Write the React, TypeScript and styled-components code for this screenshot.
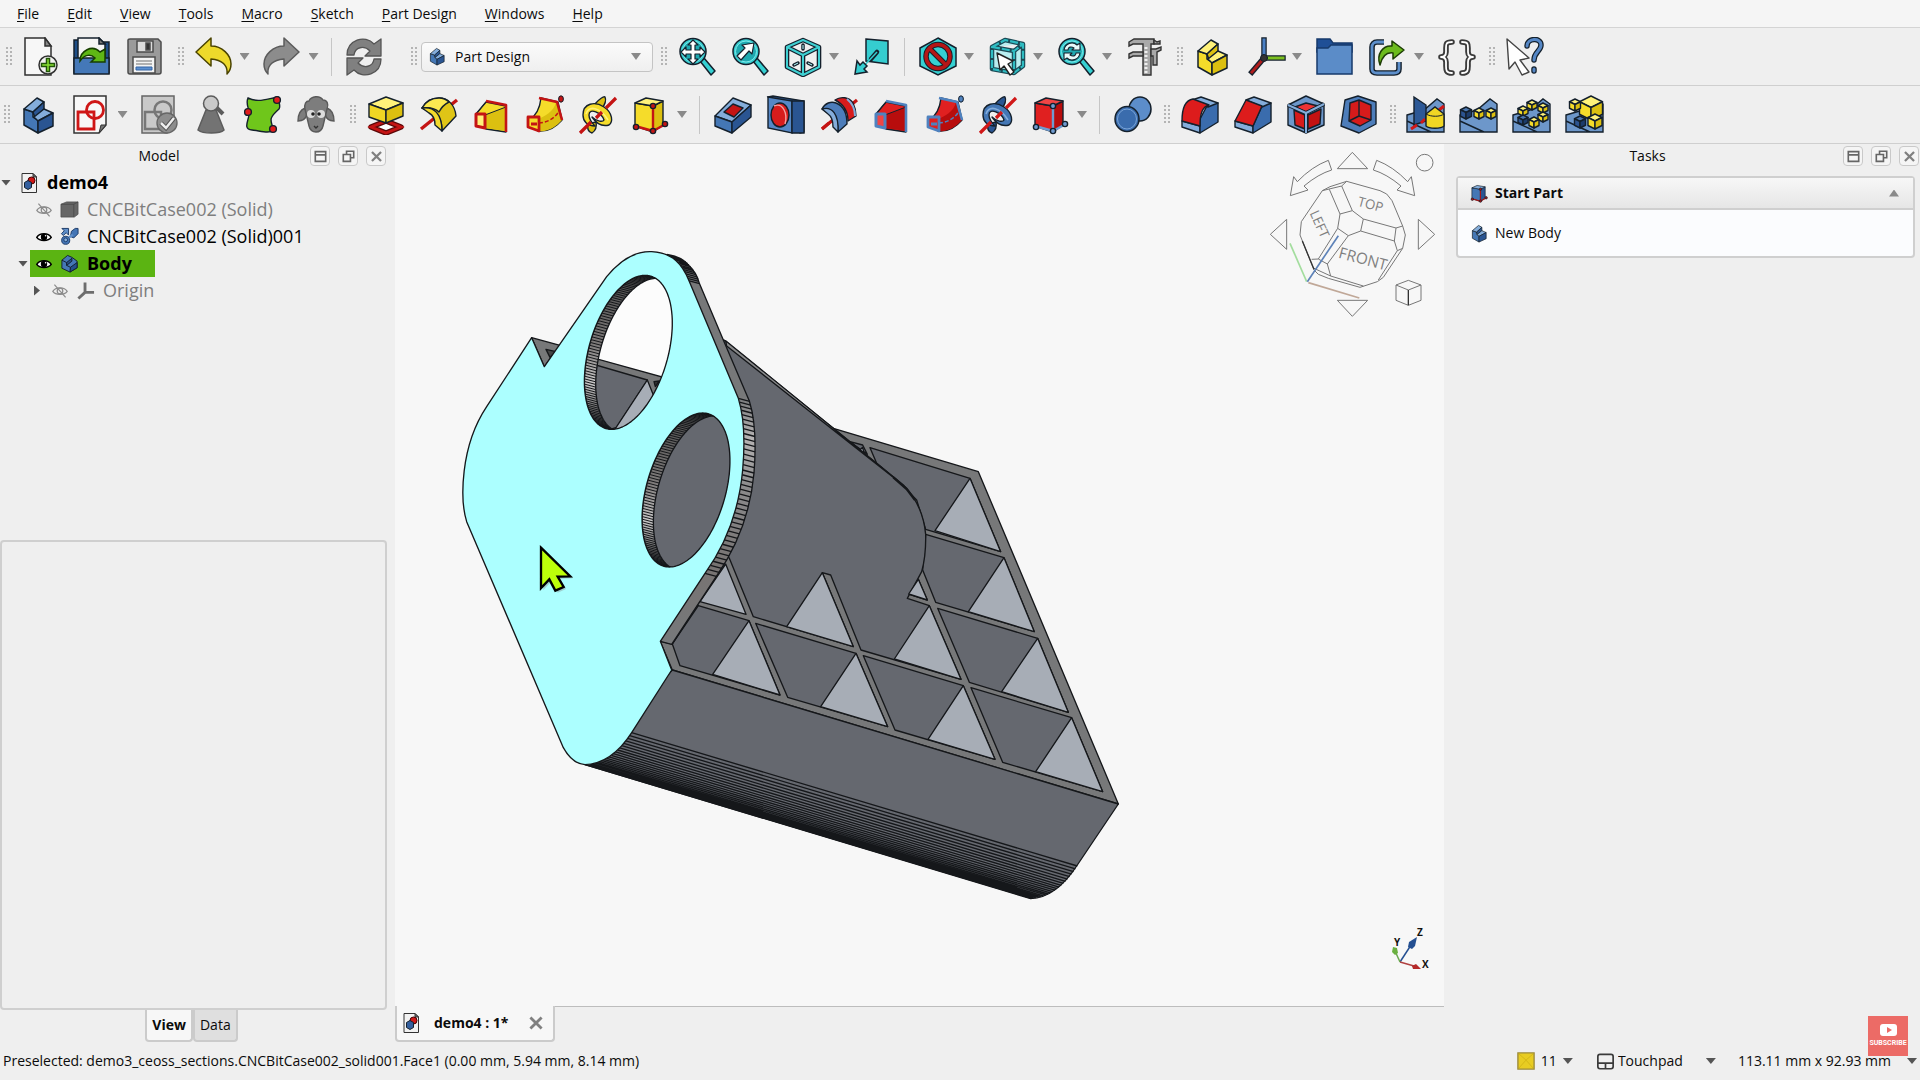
import React from "react";
import styled, { createGlobalStyle } from "styled-components";

const INK = "#14202c";
const FONT = `"Open Sans", "Noto Sans", sans-serif`;

const Global = createGlobalStyle`
  html, body, #root { height: 100%; }
  body { margin: 0; background: #efefef; color: #0b0b0b; font-family: ${FONT}; font-size: 14px; line-height: 20px; overflow: hidden; }
  * { box-sizing: border-box; }
  button, select { font: inherit; color: inherit; }
`;

/* ---------- drawing helpers ---------- */

type Pt = [number, number];
type Faces = [string, string, string];
const YELLOW: Faces = ["#fff27a", "#f5dc2a", "#dcc010"];
const BLUE: Faces = ["#84addb", "#4477b5", "#2a5592"];
const NAVY: Faces = ["#4b77b0", "#2c5490", "#1c3c6c"];
const RED: Faces = ["#f04545", "#e02020", "#b80d0d"];

const Box = ({ x, y, w, h, c, s = INK }: { x: number; y: number; w: number; h: number; c: Faces; s?: string }) => {
  const q = w * 0.5;
  return (
    <g stroke={s} strokeWidth={1.4} strokeLinejoin="round">
      <path d={`M${x} ${y}l${w} ${q}l${-w} ${q}l${-w} ${-q}z`} fill={c[0]} />
      <path d={`M${x - w} ${y + q}l${w} ${q}V${y + h}l${-w} ${-q}z`} fill={c[1]} />
      <path d={`M${x + w} ${y + q}l${-w} ${q}V${y + h}l${w} ${-q}z`} fill={c[2]} />
    </g>
  );
};

const Steps = ({ c }: { c: Faces }) => (
  <g stroke={INK} strokeWidth={1.5} strokeLinejoin="round">
    <path d="M5 14v16l14 8V25l-5-3v-5z" fill={c[1]} />
    <path d="M5 14L18 3l7 4L14 17z" fill={c[0]} />
    <path d="M14 17L25 7v7l-9 9z" fill={c[2]} />
    <path d="M15 22l10-8 9 4-15 8z" fill={c[0]} />
    <path d="M19 26l15-8v13l-15 7z" fill={c[2]} />
  </g>
);

const Lens = ({ children }: { children?: React.ReactNode }) => (
  <g stroke={INK} strokeWidth={1.5} strokeLinejoin="round">
    <path d="M23 24l4-3 11 13-4 4z" fill="#35d0d2" />
    <circle cx={16} cy={14.5} r={13} fill="#35cdd0" />
    <circle cx={16} cy={14.5} r={10.5} fill="#1fa9b0" stroke="#7fe9ea" strokeWidth={1} />
    {children}
  </g>
);

const Wedge = ({ c, e, flare }: { c: Faces; e: string; flare?: boolean }) =>
  flare ? (
    <g strokeLinejoin="round">
      <path d="M4 25c7-4 11-13 12-22l17 4 4 18c-6 7-14 12-24 11z" fill={c[1]} stroke={INK} strokeWidth={1.4} />
      <path d="M14 24c5-3 15-7 17-17l6 18c-6 7-14 12-23 11z" fill={c[2]} />
      <path d="M14 3l18 4 5 18" fill="none" stroke={e} strokeWidth={2.6} />
      <path d="M14 28c6 0 16-4 20-12" fill="none" stroke={e} strokeWidth={1.4} strokeDasharray="4 2" />
      <path d="M3 22h11v14L3 32z" fill={c[1]} stroke={e} strokeWidth={2.8} />
      <path d="M6 29h6" stroke={e} strokeWidth={3} />
      <ellipse cx={36} cy={4} rx={2.4} ry={3.2} fill={e} stroke={INK} />
    </g>
  ) : (
    <g strokeLinejoin="round">
      <path d="M4 19L14 7l20 4v26L14 34z" fill={c[1]} stroke={INK} strokeWidth={1.4} />
      <path d="M13 20l21-8v24l-21-3z" fill={c[2]} />
      <path d="M4 19L14 7M13 20l21-8" stroke={INK} strokeWidth={1} />
      <path d="M14 6l20 4v27" fill="none" stroke={e} strokeWidth={2.6} />
      <path d="M4 19h9v14l-9-2z" fill={c[0]} stroke={e} strokeWidth={3} />
    </g>
  );

const Helix = ({ c, rod }: { c: Faces; rod: string }) => (
  <g stroke={INK} strokeWidth={1.4} strokeLinejoin="round">
    <path d="M17 9c4-5 9-8 10-7c2 4-1 9-4 13z" fill={c[2]} />
    <path d="M10 29l8-2c1 5-1 9-4 11c-4-1-5-5-4-9z" fill={c[2]} />
    <path
      d="M5 20C5 8 17 6 26 12C35 18 35 27 31 30C24 32 18 28 14 22C19 27 25 27 26 25C24 18 11 12 11 20C11 25 14 28 17 31C9 31 5 26 5 20z"
      fill={c[1]}
    />
    <path d="M8 19c3-9 14-7 22 6" fill="none" stroke={c[0]} strokeWidth={1.6} />
    <path d="M38 3l-10 10M24 17l-6 6M13 27L2 38" stroke={rod} strokeWidth={3.2} />
  </g>
);

const Primitive = ({ c, e }: { c: Faces; e: string }) => (
  <g stroke={INK} strokeWidth={1.4} strokeLinejoin="round">
    <path d="M4 8l18 3v26L4 31z" fill={c[1]} />
    <path d="M22 11l10-5v24l-10 7z" fill={c[2]} />
    <path d="M4 8l11-5 17 3-10 5z" fill={c[0]} />
    <path d="M4 31l18 5 11-6M22 36V11" fill="none" stroke={e} strokeWidth={2.4} />
    {[[5, 32], [22, 11], [22, 36], [34, 29]].map(([x, y]) => (
      <circle key={`${x}-${y}`} cx={x} cy={y} r={2.6} fill={e} />
    ))}
  </g>
);

const PatternBase = () => <path d="M1 20l17-5 13-11 7 5v28H1zM1 26l24 11" fill="#6d97ca" stroke={INK} strokeWidth={1.4} />;

const icons: Record<string, React.ReactNode> = {
  newDoc: (
    <g stroke="#303030" strokeWidth={1.5}>
      <path d="M4 1h20l6 8v29H4z" fill="#f7f7f7" />
      <path d="M24 1v8h6z" fill="#888" />
      <circle cx={27} cy={28} r={9} fill="#f2f2f2" />
      <path d="M25.5 21.5h3v5h5v3h-5v5h-3v-5h-5v-3h5z" fill="#8ae234" stroke="#22540a" />
    </g>
  ),
  open: (
    <g stroke={INK} strokeWidth={1.5}>
      <path d="M1 3h5v33H1zM31 5h5v31h-5z" fill="#1f4f88" />
      <path d="M5 1h21l6 6v18H5z" fill="#f4f4f4" />
      <path d="M26 1v6h6z" fill="#777" />
      <path d="M1 21h35v16H1z" fill="#4478b8" />
      <path d="M7 24c0-10 12-17 20-9l5-3v13H18l4-4c-4-4-10-4-15 3z" fill="#5fb715" stroke="#173f00" />
    </g>
  ),
  save: (
    <g stroke="#4c4c4c" strokeWidth={1.5}>
      <path d="M3 3c0-1 1-1 2-1h28l3 3v30c0 1-1 2-2 2H5c-1 0-2-1-2-2z" fill="#9a9a9a" />
      <path d="M12 4h16v11H12z" fill="#dcdcdc" />
      <path d="M21 6h4v7h-4z" fill="#333" />
      <path d="M8 20h22v16H8z" fill="#f4f4f4" />
      <path d="M11 24h16M11 27h16" stroke="#9a9a9a" />
      <path d="M11 30h16v3H11z" fill="#5b8fd0" stroke="#3465a4" strokeWidth={1} />
    </g>
  ),
  undo: <path d="M3 15L18 1v8c11 0 20 9 20 18c0 5-2 8-4 10c1-9-5-14-16-15v7z" fill="#edd92b" stroke="#4a4300" strokeWidth={1.5} strokeLinejoin="round" />,
  redo: <path d="M37 15L22 1v8C11 9 2 18 2 27c0 5 2 8 4 10c-1-9 5-14 16-15v7z" fill="#8c8c8c" stroke="#5b5b5b" strokeWidth={1.5} strokeLinejoin="round" />,
  refresh: (
    <g fill="#808080" stroke="#555" strokeWidth={1.3} strokeLinejoin="round">
      <path d="M3 18C3 3 21-3 30 7l7-5v17H21l5-5c-6-6-15-4-16 4z" />
      <path d="M37 22c0 15-18 21-27 11l-7 5V21h16l-5 5c6 6 15 4 16-4z" />
    </g>
  ),
  body: <Steps c={BLUE} />,
  part: <Steps c={YELLOW} />,
  fitAll: (
    <Lens>
      <path d="M16 3l5 5h-3v5h5v-3l5 5-5 5v-3h-5v5h3l-5 5-5-5h3v-5H9v3l-5-5 5-5v3h5V8h-3z" fill="#fff" strokeWidth={1.2} />
    </Lens>
  ),
  fitSel: (
    <Lens>
      <path d="M24 6l-2 11-3-3-8 9-4-4 8-8-3-3z" fill="#fff" strokeWidth={1.2} />
    </Lens>
  ),
  refreshView: (
    <Lens>
      <path d="M8 13c1-7 9-9 13-5l3-2v7h-8l2-2c-3-2-6-1-6 2zM24 16c-1 7-9 9-13 5l-3 2v-7h8l-2 2c3 2 6 1 6-2z" fill="#e8fbfb" strokeWidth={1.1} />
    </Lens>
  ),
  iso: (
    <g fill="none" strokeLinejoin="round">
      <path d="M20 3l16 7v20l-16 8-16-8V10zM4 10l16 8 16-8M20 18v20" stroke={INK} strokeWidth={4.6} />
      <path d="M20 3l16 7v20l-16 8-16-8V10zM4 10l16 8 16-8M20 18v20" stroke="#3fd0d2" strokeWidth={2} />
      <path d="M20 8v4M11 28l4-2M25 26l4 2" stroke={INK} strokeWidth={3.5} strokeLinecap="round" />
      <path d="M20 8v4M11 28l4-2M25 26l4 2" stroke="#bff" strokeWidth={1} />
    </g>
  ),
  alignView: (
    <g stroke={INK} strokeWidth={1.5}>
      <path d="M14 2l22 2v23l-22-3z" fill="#35cdd0" />
      <path d="M25 15l-6 7" strokeWidth={4.5} strokeLinecap="round" />
      <path d="M25 15L10 31" stroke="#35cdd0" strokeWidth={1.5} />
      <path d="M3 37l2-13 3 4 3-3 4 4-3 3 3 3z" fill="#35cdd0" />
    </g>
  ),
  noSel: (
    <g stroke={INK} strokeWidth={1.5}>
      <path d="M20 1l18 10v18L20 38 2 29V11z" fill="#35d0d2" />
      <circle cx={20} cy={19.5} r={12} fill="none" strokeWidth={5.5} />
      <path d="M11 11l18 18" strokeWidth={5.5} />
      <circle cx={20} cy={19.5} r={12} fill="none" stroke="#b51616" strokeWidth={3.5} />
      <path d="M11 11l18 18" stroke="#b51616" strokeWidth={3.5} />
    </g>
  ),
  boxSel: (
    <g fill="none" strokeLinejoin="round">
      <path d="M5 10l13-7 18 4v22l-9 7-22-4zM5 10l22 4 9-7M27 14v22" fill="#b9eef0" stroke="#1b4a55" strokeWidth={4.5} />
      <path d="M5 10l13-7 18 4v22l-9 7-22-4zM5 10l22 4 9-7M27 14v22" stroke="#2fbcc2" strokeWidth={2.2} strokeDasharray="8 2" />
      <path d="M10 16l16 8-5 3 6 8-4 3-6-9-4 4z" fill="#fff" stroke="#222" strokeWidth={1.4} />
    </g>
  ),
  caliper: (
    <g stroke="#333" strokeWidth={1.4} fill="#a9a9a9">
      <path d="M4 5l5-3h20v5h-3v31h-8V7H8l-4 2z" />
      <path d="M4 17l4-2h10v4H8l-4 2z" />
      <path d="M26 12h5l5-2v3l-4 2v13h-4v-9h-2z" />
      <path d="M29 3v4h6V4l-3 1z" />
      <path d="M21 10v26" stroke="#eee" strokeDasharray="2 2" strokeWidth={3} />
    </g>
  ),
  axes: (
    <g strokeLinecap="square">
      <path d="M18 20V3" stroke={INK} strokeWidth={5.5} />
      <path d="M18 20V3" stroke="#4a80c4" strokeWidth={3} />
      <path d="M18 21h19" stroke={INK} strokeWidth={5.5} />
      <path d="M18 21h19" stroke="#7cc020" strokeWidth={3} />
      <path d="M18 21L6 35" stroke={INK} strokeWidth={5.5} />
      <path d="M18 21L6 35" stroke="#b01c1c" strokeWidth={3} />
      <circle cx={18} cy={21} r={3.5} fill="#333" stroke={INK} />
    </g>
  ),
  folder: (
    <g stroke="#173a6b" strokeWidth={1.5}>
      <path d="M2 2h13l3 4h19v9H2z" fill="#1f4f96" />
      <path d="M2 11h11l3-3h21v29H2z" fill="#5b8cc8" />
    </g>
  ),
  link: (
    <g strokeLinejoin="round">
      <path d="M16 5H9c-3 0-5 2-5 5v22c0 3 2 4 5 4h17c3 0 5-1 5-4v-7" fill="none" stroke={INK} strokeWidth={5.6} />
      <path d="M16 5H9c-3 0-5 2-5 5v22c0 3 2 4 5 4h17c3 0 5-1 5-4v-7" fill="none" stroke="#5d8fcb" strokeWidth={2.8} />
      <path d="M12 28C8 17 15 8 24 9V4l12 9-11 9v-6c-7-1-11 4-13 12z" fill="#6cbb1c" stroke="#1d3d05" strokeWidth={1.5} />
    </g>
  ),
  braces: (
    <g fill="none" strokeLinecap="round" strokeLinejoin="round">
      <path d="M15 5c-6 0-6 2-6 6v4c0 3-2 5-5 5c3 0 5 2 5 5v4c0 4 0 7 6 7M25 5c6 0 6 2 6 6v4c0 3 2 5 5 5c-3 0-5 2-5 5v4c0 4 0 7-6 7" stroke="#3b3b3b" strokeWidth={5.6} />
      <path d="M15 5c-6 0-6 2-6 6v4c0 3-2 5-5 5c3 0 5 2 5 5v4c0 4 0 7 6 7M25 5c6 0 6 2 6 6v4c0 3 2 5 5 5c-3 0-5 2-5 5v4c0 4 0 7-6 7" stroke="#fff" strokeWidth={1.8} />
    </g>
  ),
  whatsThis: (
    <g strokeLinejoin="round">
      <path d="M2 2l22 19-9 2 9 12-7 3-7-13-6 7z" fill="#fff" stroke="#444" strokeWidth={1.4} />
      <path d="M22 9c0-8 14-9 14-1c0 6-7 7-7 15M29 32v2" fill="none" stroke={INK} strokeWidth={5.5} strokeLinecap="round" />
      <path d="M22 9c0-8 14-9 14-1c0 6-7 7-7 15M29 32v2" fill="none" stroke="#5587c6" strokeWidth={3} strokeLinecap="round" />
    </g>
  ),
  sketch: (
    <g fill="none">
      <path d="M3 1h32v29l-7 8H3z" fill="#f8f8f8" stroke="#333" strokeWidth={1.5} />
      <path d="M35 30h-5l-2 8z" fill="#777" stroke="#333" />
      <circle cx={24} cy={15} r={8.5} stroke="#cf1717" strokeWidth={2.8} />
      <path d="M7 17h16v17H7z" stroke="#cf1717" strokeWidth={2.8} />
    </g>
  ),
  validate: (
    <g fill="none">
      <path d="M2 1h32v29l-7 8H2z" fill="#c9c9c9" stroke="#666" strokeWidth={1.5} />
      <circle cx={23} cy={15} r={8.5} stroke="#777" strokeWidth={2.5} />
      <path d="M5 17h16v17H5z" stroke="#777" strokeWidth={2.5} />
      <circle cx={27} cy={28} r={10} fill="#8d8d8d" stroke="#666" strokeWidth={1.4} />
      <path d="M21 28l5 5 8-10" stroke="#555" strokeWidth={4.5} />
      <path d="M21 28l5 5 8-10" stroke="#eee" strokeWidth={2.5} />
    </g>
  ),
  pawn: (
    <g stroke="#5c5c5c" strokeWidth={1.5}>
      <path d="M14 15h10l8 20c-4 4-21 4-26 0z" fill="#737373" />
      <path d="M25 13l6 6" strokeWidth={4} />
      <circle cx={19} cy={8.5} r={7.5} fill="#c9c9c9" />
    </g>
  ),
  surface: (
    <g stroke={INK} strokeWidth={1.4}>
      <path d="M4 3c10 5 18 1 30-1c1 7 3 9 1 12c-9 8-10 10-5 21c-5 4-13 1-22 0c-9-1-4-8-3-15c1-6-4-11-1-17z" fill="#6fc61b" />
      <circle cx={33} cy={5} r={3.4} fill="#e01b1b" />
      <circle cx={4} cy={17} r={3.4} fill="#e01b1b" />
      <circle cx={29} cy={34} r={3.4} fill="#e01b1b" />
    </g>
  ),
  sheep: (
    <g fill="#7d7d7d" stroke="#5a5a5a" strokeWidth={1.4}>
      <path d="M9 13c-5 2-7 8-7 13c5 0 8-3 9-7zM31 13c5 2 7 8 7 13c-5 0-8-3-9-7z" />
      <path d="M9 14c-1-5 1-8 4-8c2-5 11-6 14-1c4 0 6 4 4 9l-4 17c-2 8-12 8-14 0z" />
      <circle cx={15} cy={19} r={4} fill="#ddd" stroke="none" />
      <circle cx={25} cy={19} r={4} fill="#ddd" stroke="none" />
      <circle cx={17} cy={19} r={1.8} fill="#222" stroke="none" />
      <circle cx={23} cy={19} r={1.8} fill="#222" stroke="none" />
      <path d="M18 31l2 2 2-2" fill="none" stroke="#333" />
    </g>
  ),
  pad: (
    <g>
      <path d="M20 26l15 6-15 6-15-6z" fill="#fff" stroke="#5c0808" strokeWidth={5.5} strokeLinejoin="round" />
      <path d="M20 26l15 6-15 6-15-6z" fill="none" stroke="#c41414" strokeWidth={2.8} />
      <g stroke={INK} strokeWidth={1.4} strokeLinejoin="round">
        <path d="M3 9l17-7 17 6-17 7z" fill="#fff27a" />
        <path d="M3 9l17 6v13L3 22z" fill="#f0d624" />
        <path d="M37 8l-17 7v13l17-7z" fill="#dcc010" />
      </g>
    </g>
  ),
  revolve: (
    <g stroke={INK} strokeWidth={1.4} strokeLinejoin="round">
      <path d="M2 34L38 5" stroke="#c41414" strokeWidth={3.4} />
      <path d="M3 13C7 6 13 3 20 3c9 0 16 7 17 18L23 36c0-10-3-16-9-18z" fill="#dfc516" />
      <path d="M3 13C7 6 13 3 20 3c4 0 7 1 10 4c-4 2-8 6-10 10c-3-3-9-5-17-4z" fill="#fbe951" />
      <path d="M3 13c12-2 20 6 20 23l-7-6c0-6-2-10-6-12z" fill="#f3da2c" />
    </g>
  ),
  loft: <Wedge c={YELLOW} e="#c41414" />,
  pipe: <Wedge c={YELLOW} e="#c41414" flare />,
  helix: <Helix c={YELLOW} rod="#c41414" />,
  primitive: <Primitive c={YELLOW} e="#c41414" />,
  pocket: (
    <g stroke={INK} strokeWidth={1.4} strokeLinejoin="round">
      <path d="M2 21L20 3l18 7-19 17z" fill="#84addb" />
      <path d="M2 21l17 6v11L2 31z" fill="#4477b5" />
      <path d="M38 10v12L19 38V27z" fill="#2a5592" />
      <path d="M11 17l9-8 10 4-9 9z" fill="#c41414" />
    </g>
  ),
  hole: (
    <g stroke={INK} strokeWidth={1.4}>
      <path d="M2 2l5-1 31 5v31l-4 1z" fill="#2a5592" />
      <path d="M2 2l24 4v32L2 33z" fill="#5587c6" />
      <path d="M26 6l12 0v32H26z" fill="#2a5592" />
      <ellipse cx={14} cy={20} rx={9} ry={12} fill="#d81c1c" />
      <path d="M8 11c9-4 14 8 11 18" fill="none" stroke="#f7a0a0" />
    </g>
  ),
  groove: (
    <g stroke={INK} strokeWidth={1.4} strokeLinejoin="round">
      <path d="M38 5L3 34" stroke="#c41414" strokeWidth={3.2} />
      <path d="M16 5c6-4 14-3 18 3c2 4 3 8 3 13l-8 5c0-10-5-17-13-21z" fill="#d81c1c" />
      <path d="M28 4c5 4 8 10 8 17" fill="none" stroke="#84addb" strokeWidth={2} />
      <path d="M3 14C6 8 12 6 17 8c8 3 11 12 11 21l-9 8c0-11-4-17-9-18z" fill="#4d7dba" />
      <path d="M3 14c10-3 17 5 16 23l-5-5c0-6-2-11-5-13z" fill="#84addb" />
      <path d="M10 28L3 34" stroke="#c41414" strokeWidth={3} />
    </g>
  ),
  subLoft: <Wedge c={RED} e="#4f82bf" />,
  subPipe: <Wedge c={RED} e="#4f82bf" flare />,
  subHelix: <Helix c={BLUE} rod="#d01818" />,
  subPrimitive: <Primitive c={RED} e="#6f9bd0" />,
  boolean: (
    <g stroke={INK} strokeWidth={1.5}>
      <ellipse cx={27} cy={14} rx={11} ry={12} fill="#5c8dca" />
      <ellipse cx={14} cy={24} rx={12} ry={12.5} fill="#3a6cad" />
      <ellipse cx={14} cy={24} rx={9.5} ry={10} fill="none" stroke="#7aa5d8" strokeWidth={1} />
    </g>
  ),
  fillet: (
    <g stroke={INK} strokeWidth={1.4} strokeLinejoin="round">
      <path d="M2 26l18 5v7L2 32z" fill="#84addb" />
      <path d="M20 38V24L28 9l10-1v19z" fill="#3a6cad" />
      <path d="M12 5l9-3 17 6-10 4z" fill="#84addb" />
      <path d="M2 26C2 13 6 5 13 4l16 6c-7 2-9 9-9 21z" fill="#dd1c1c" />
    </g>
  ),
  chamfer: (
    <g stroke={INK} strokeWidth={1.4} strokeLinejoin="round">
      <path d="M2 26l18 5v7L2 32z" fill="#84addb" />
      <path d="M20 38V31l9-20 9-3v19z" fill="#3a6cad" />
      <path d="M13 5l8-3 17 6-9 4z" fill="#84addb" />
      <path d="M2 26L13 5l16 6-9 20z" fill="#dd1c1c" />
    </g>
  ),
  draft: (
    <g stroke={INK} strokeWidth={1.4} strokeLinejoin="round">
      <path d="M2 10L20 1l18 8v21L20 38 2 30z" fill="#6d97ca" />
      <path d="M9 12l11-4 12 3-12 6z" fill="#e33" />
      <path d="M8 15l11 5v14L9 30z" fill="#d61b1b" />
      <path d="M22 20l13-6-1 15-12 5z" fill="#c41212" />
      <path d="M2 10l18 8 18-9M20 18v20" fill="none" strokeWidth={4} />
      <path d="M2 10l18 8 18-9M20 18v20" fill="none" stroke="#84addb" strokeWidth={2} />
    </g>
  ),
  thickness: (
    <g stroke={INK} strokeWidth={1.4} strokeLinejoin="round">
      <path d="M6 5l13-4 18 6v22L20 38 2 31z" fill="#4d7dba" />
      <path d="M11 8l9-3 12 5v15l-11 6-11-5z" fill="#d61b1b" />
      <path d="M20 5v16l-10 5M20 21l12 4" fill="none" />
    </g>
  ),
  mirror: (
    <g>
      <PatternBase />
      <path d="M8 2l12 8v16L8 30z" fill="#2c5896" stroke={INK} strokeWidth={1.4} />
      <path d="M5 34l6-4M15 28l4-4M33 15l5-4" stroke="#d01818" strokeWidth={3} />
      <path d="M20 19l9-7 9 7v12c-3 3-15 3-18 0z" fill="#f0d624" stroke={INK} strokeWidth={1.4} />
      <path d="M20 19c5 3 14 3 18 0" stroke={INK} fill="none" />
    </g>
  ),
  linear: (
    <g>
      <PatternBase />
      <Box x={7} y={12} w={5.5} h={12} c={NAVY} />
      <Box x={20} y={13} w={5} h={11} c={YELLOW} />
      <Box x={32} y={13} w={5} h={11} c={YELLOW} />
    </g>
  ),
  polar: (
    <g>
      <PatternBase />
      <Box x={20} y={5} w={5} h={10} c={YELLOW} />
      <Box x={11} y={11} w={5} h={10} c={YELLOW} />
      <Box x={31} y={8} w={5} h={10} c={YELLOW} />
      <Box x={31} y={17} w={5} h={10} c={YELLOW} />
      <Box x={11} y={20} w={5} h={10} c={NAVY} />
      <Box x={22} y={22} w={5} h={11} c={YELLOW} />
    </g>
  ),
  multi: (
    <g>
      <PatternBase />
      <Box x={26} y={1} w={11.5} h={24} c={YELLOW} />
      <Box x={10} y={4} w={5.5} h={12} c={YELLOW} />
      <Box x={15} y={21} w={5.5} h={12} c={NAVY} />
      <Box x={30} y={19} w={7} h={15} c={YELLOW} />
    </g>
  ),
  doc: (
    <g stroke="#333" strokeWidth={2}>
      <path d="M6 1h22l7 7v31H6z" fill="#f2f2f2" />
      <path d="M28 1v7h7z" fill="#777" />
      <circle cx={25} cy={15} r={7} fill="#d01818" stroke="#400" />
      <path d="M11 19l7-4 7 4v10l-7 4-7-4z" fill="#345f9e" stroke={INK} />
    </g>
  ),
  solid: (
    <g stroke="#4a4a4a" strokeWidth={1.5}>
      <path d="M2 9l12-5h24v26l-8 6H2z" fill="#666" />
      <path d="M2 9h27v27M29 9l9-5" fill="none" stroke="#444" />
    </g>
  ),
  clone: (
    <g stroke="#1c3a66" strokeWidth={2}>
      <path d="M4 3h14v14l-5-5-6 6-4-4 6-6z" fill="#5f8fca" />
      <path d="M24 9l8-6h6v11l-9 9-7-3z" fill="#4375b5" />
      <circle cx={12} cy={28} r={8.5} fill="#4375b5" />
      <path d="M19 22l8-6" strokeWidth={5} stroke="#5f8fca" />
      <circle cx={12} cy={27} r={4} fill="#84addb" />
    </g>
  ),
  bodySmall: (
    <g stroke={INK} strokeWidth={2} strokeLinejoin="round">
      <path d="M4 13L16 3l9 4 11 8v14l-15 9-17-8z" fill="#4477b5" />
      <path d="M4 13l10 5v6l8 4v10" fill="none" />
      <path d="M14 18l11-9v6l-11 9z" fill="#24508c" />
      <path d="M22 28l14-10v11l-15 9z" fill="#24508c" />
    </g>
  ),
  origin: <path d="M19 3v21H38M19 24L5 37" fill="none" stroke="#6d6d6d" strokeWidth={6} />,
  eye: (
    <g>
      <path d="M2 21C9 9 31 9 38 21C31 31 9 31 2 21z" fill="#fff" stroke="#000" strokeWidth={4} />
      <circle cx={20} cy={20} r={8} />
      <circle cx={24} cy={17} r={2} fill="#fff" />
    </g>
  ),
  eyeOff: (
    <g fill="none" stroke="#8b8b8b" strokeWidth={3}>
      <path d="M2 21C9 9 31 9 38 21C31 31 9 31 2 21z" />
      <circle cx={20} cy={20} r={7} />
      <path d="M6 4l28 32" />
    </g>
  ),
  startPart: <Primitive c={BLUE} e="#a51616" />,
  min: <path d="M4 5h32v30H4zM4 15h32" fill="none" stroke="#666" strokeWidth={5} />,
  float: <path d="M14 13V4h22v20H27M4 14h22v21H4z" fill="none" stroke="#666" strokeWidth={5} />,
  close: <path d="M6 6l28 28M34 6L6 34" fill="none" stroke="#808080" strokeWidth={7} />,
  notif: (
    <g>
      <path d="M2 2h36v36H2z" fill="#e8cc22" stroke="#9c8a3a" strokeWidth={3} />
      <path d="M4 4l16 14L36 4M4 36l16-18 16 18" fill="none" stroke="#d2b616" strokeWidth={2} />
    </g>
  ),
  touchpad: <path d="M7 3h26c3 0 5 2 5 5v24c0 3-2 5-5 5H7c-3 0-5-2-5-5V8c0-3 2-5 5-5zM2 24h36M20 24v13" fill="none" stroke="#3a3a3a" strokeWidth={4} />,
};

const Svg = styled.svg<{ $size: number }>`
  display: block;
  flex: none;
  width: ${(p) => p.$size}px;
  height: ${(p) => p.$size}px;
`;
const Icon = ({ name, size = 40 }: { name: string; size?: number }) => (
  <Svg $size={size} viewBox="0 0 40 40" aria-hidden="true">
    {icons[name]}
  </Svg>
);

const Caret = styled.span<{ $dir?: "up" | "right"; $dark?: boolean }>`
  flex: none;
  width: ${(p) => (p.$dir === "right" ? "6px" : "10px")};
  height: ${(p) => (p.$dir === "right" ? "10px" : p.$dark ? "6px" : "7px")};
  background: ${(p) => (p.$dark ? "#555" : "#8a8a8a")};
  clip-path: ${(p) =>
    p.$dir === "up"
      ? "polygon(50% 0, 100% 100%, 0 100%)"
      : p.$dir === "right"
        ? "polygon(0 0, 100% 50%, 0 100%)"
        : "polygon(0 0, 100% 0, 50% 100%)"};
`;

/* ---------- window frame ---------- */

const Window = styled.div`
  display: flex;
  flex-direction: column;
  height: 100vh;
`;
const MenuBar = styled.nav`
  display: flex;
  flex: none;
  height: 28px;
  padding: 0 3px;
  background: #f5f5f5;
  border-bottom: 1px solid #d4d4d4;
`;
const MenuButton = styled.button`
  padding: 0 14px;
  border: 0;
  background: none;
  u { text-underline-offset: 2px; }
`;
const Toolbar = styled.div`
  display: flex;
  align-items: center;
  flex: none;
  height: 58px;
  border-bottom: 1px solid #cfcfcf;
`;
const ToolRun = styled.div<{ $slot: number; $drop: number; $grip: number; $start?: number }>`
  --slot: ${(p) => p.$slot}px;
  --drop: ${(p) => p.$drop}px;
  --grip: ${(p) => p.$grip}px;
  --start: ${(p) => p.$start ?? p.$grip}px;
  display: flex;
  align-items: center;
`;
const Tool = styled.button<{ $menu?: boolean }>`
  display: grid;
  grid-template-columns: var(--slot) ${(p) => (p.$menu ? "var(--drop)" : "")};
  align-items: center;
  justify-items: center;
  padding: 0;
  border: 0;
  background: none;
  ${Caret} { margin-left: -6px; }
`;
const Grip = styled.span`
  display: flex;
  flex: none;
  justify-content: flex-end;
  width: var(--grip);
  height: 20px;
  padding-right: 3px;
  &:first-child { width: var(--start); }
  &::before {
    content: "";
    width: 6px;
    background: radial-gradient(circle at 1px 1px, #b4b4b4 1px, transparent 1px) 0 0 / 4px 4px;
  }
`;
const Divider = styled.span`
  flex: none;
  width: 1px;
  height: 38px;
  margin: 0 6px;
  background: #c6c6c6;
`;
const Combo = styled.label`
  display: flex;
  align-items: center;
  gap: 8px;
  width: 232px;
  height: 30px;
  margin: 0 2px 0 1px;
  padding: 0 11px 0 6px;
  border: 1px solid #c4c4c4;
  border-radius: 4px;
  background: linear-gradient(#fbfbfb, #efefef);
`;
const PlainSelect = styled.select<{ $width?: number }>`
  appearance: none;
  flex: ${(p) => (p.$width ? "none" : "1")};
  width: ${(p) => (p.$width ? `${p.$width}px` : "auto")};
  padding: 0;
  border: 0;
  outline: 0;
  background: none;
`;

const menus = ["File", "Edit", "View", "Tools", "Macro", "Sketch", "Part Design", "Windows", "Help"];

const renderTools = (items: string[]) =>
  items.map((it, i) => {
    if (it === "|") return <Divider key={i} />;
    if (it === "::") return <Grip key={i} />;
    const menu = it.endsWith("+");
    const name = menu ? it.slice(0, -1) : it;
    return (
      <Tool key={i} $menu={menu} aria-label={name}>
        <Icon name={name} />
        {menu && <Caret />}
      </Tool>
    );
  });

const Workspace = styled.main`
  display: grid;
  grid-template-columns: 395px minmax(0, 1fr) 476px;
  flex: 1;
  min-height: 0;
`;

/* ---------- docks ---------- */

const Dock = styled.aside<{ $left?: boolean }>`
  display: flex;
  flex-direction: column;
  min-height: 0;
  padding-right: ${(p) => (p.$left ? "8px" : "0")};
`;
const DockHeader = styled.header`
  display: flex;
  align-items: center;
  flex: none;
  gap: 8px;
  height: 24px;
  padding: 0 1px 0 16px;
`;
const DockTitle = styled.h2`
  flex: 1;
  margin: 0;
  font-size: 14px;
  font-weight: 400;
  text-align: center;
`;
const DockButton = styled.button`
  display: grid;
  place-items: center;
  width: 20px;
  height: 20px;
  padding: 0;
  border: 1px solid #c9c9c9;
  border-radius: 4px;
  background: #f5f5f5;
`;
const DockHead = ({ title }: { title: string }) => (
  <DockHeader>
    <DockTitle>{title}</DockTitle>
    {["min", "float", "close"].map((n) => (
      <DockButton key={n} aria-label={`${n} ${title}`}>
        <Icon name={n} size={13} />
      </DockButton>
    ))}
  </DockHeader>
);

const Tree = styled.ul`
  flex: 1;
  margin: 0;
  padding: 1px 0 0;
  list-style: none;
  font-size: 18px;
  line-height: 27px;
`;
const TreeRow = styled.li<{ $indent: number; $muted?: boolean; $bold?: boolean }>`
  display: flex;
  align-items: center;
  height: 27px;
  padding-left: ${(p) => p.$indent}px;
  color: ${(p) => (p.$muted ? "#7e7e7e" : "#000")};
  font-weight: ${(p) => (p.$bold ? 700 : 400)};
`;
const Twist = styled.span`
  display: flex;
  width: 12px;
`;
const TreeLabel = styled.span<{ $selected?: boolean }>`
  display: flex;
  align-items: center;
  gap: 8px;
  height: 27px;
  padding: 0 23px 0 6px;
  background: ${(p) => (p.$selected ? "#5bb412" : "none")};
`;
const PropertyPanel = styled.section`
  flex: none;
  height: 470px;
  border: 2px solid #cfcfcf;
  border-radius: 4px;
`;
const PropertyTabs = styled.div`
  display: flex;
  justify-content: center;
  flex: none;
  height: 32px;
  padding-right: 4px;
`;
const PropertyTab = styled.button<{ $active?: boolean }>`
  padding: 0 5px;
  border: 2px solid #cbcbcb;
  border-top: 0;
  border-radius: 0 0 4px 4px;
  background: ${(p) => (p.$active ? "#f7f7f7" : "#dfdfdf")};
  font-weight: ${(p) => (p.$active ? 700 : 400)};
`;

const TaskBox = styled.section`
  margin: 8px 5px 0 12px;
  border: 2px solid #cfcfcf;
  border-radius: 4px;
  background: #fbfcfe;
`;
const TaskHead = styled.button`
  display: flex;
  align-items: center;
  gap: 6px;
  width: 100%;
  height: 32px;
  padding: 0 14px 0 12px;
  border: 0;
  border-bottom: 2px solid #cfcfcf;
  background: linear-gradient(#f7f7f7, #e6e6e6);
  font-weight: 700;
  ${Caret} { margin-left: auto; }
`;
const TaskRow = styled.button`
  display: flex;
  align-items: center;
  gap: 6px;
  width: 100%;
  height: 46px;
  padding: 0 12px;
  border: 0;
  background: none;
`;

/* ---------- 3D view ---------- */

const Center = styled.section`
  display: flex;
  flex-direction: column;
  min-width: 0;
`;
const Viewport = styled.div`
  position: relative;
  flex: 1;
  min-height: 0;
  background: #f7f7f7;
  border-bottom: 1px solid #bdbdbd;
`;
const SceneSvg = styled.svg`
  display: block;
  width: 100%;
  height: 100%;
`;
const NavSvg = styled.svg`
  position: absolute;
  top: 0;
  right: 0;
  width: 204px;
  height: 186px;
`;
const CrossSvg = styled.svg`
  position: absolute;
  right: 10px;
  bottom: 32px;
  width: 50px;
  height: 50px;
`;
const DocTabs = styled.div`
  display: flex;
  flex: none;
  height: 35px;
`;
const DocTab = styled.div`
  display: flex;
  align-items: center;
  z-index: 1;
  width: 160px;
  margin-top: -1px;
  padding: 0 9px 0 4px;
  border: 2px solid #cbcbcb;
  border-top: 0;
  border-radius: 0 0 4px 4px;
  background: #f7f7f7;
  font-weight: 700;
  gap: 13px;
`;
const TabClose = styled.button`
  display: flex;
  margin-left: auto;
  padding: 0;
  border: 0;
  background: none;
`;

const D: Pt = [34, 9];
const cubic = (a: Pt, b: Pt, c: Pt, d: Pt, n: number): Pt[] =>
  Array.from({ length: n + 1 }, (_, i) => {
    const t = i / n;
    const u = 1 - t;
    return [0, 1].map((k) => u * u * u * a[k] + 3 * u * u * t * b[k] + 3 * u * t * t * c[k] + t * t * t * d[k]) as Pt;
  });
const ring = (cx: number, cy: number, n: number): Pt[] =>
  Array.from({ length: n }, (_, i) => {
    const a = (i / n) * Math.PI * 2;
    return [cx + 50 * Math.cos(a) + 122 * Math.sin(a), cy - 231 * Math.cos(a)] as Pt;
  });
const poly = (p: Pt[]) => "M" + p.map(([x, y]) => `${x.toFixed(1)} ${y.toFixed(1)}`).join("L") + "Z";
const sweep = (p: Pt[], d: Pt) => p.map(([x, y]) => `M${x.toFixed(1)} ${y.toFixed(1)}l${d[0]} ${d[1]}`).join("");

const rightArc = [
  ...cubic([895, 505], [912, 560], [915, 640], [908, 720], 15),
  ...cubic([908, 720], [898, 830], [860, 940], [795, 1030], 23),
];
const topArc = cubic([685, 77], [715, 88], [735, 120], [745, 152], 14);
const bottomArc = cubic([575, 1508], [535, 1570], [490, 1602], [435, 1604], 21);

const Hole = ({ id, cx, cy, children }: { id: string; cx: number; cy: number; children: React.ReactNode }) => {
  const front = ring(cx, cy, 170);
  const back = poly(front.map(([x, y]) => [x + D[0], y + D[1]] as Pt));
  return (
    <g>
      <clipPath id={`${id}-front`}>
        <path d={poly(front)} />
      </clipPath>
      <clipPath id={`${id}-back`}>
        <path d={back} />
      </clipPath>
      <g clipPath={`url(#${id}-front)`}>
        <path d={poly(front)} fill="url(#wall)" />
        <path d={sweep(front, D)} strokeWidth={3} />
        <g clipPath={`url(#${id}-back)`}>{children}</g>
        <path d={back} fill="none" />
      </g>
      <path d={poly(front)} fill="none" />
    </g>
  );
};

const CELL = "#65686f";
const RIB = "#777879";
const LIGHT = "#a7adb6";

const Scene = () => (
  <SceneSvg viewBox="-135 -258 3147 2586" role="img" aria-label="3D model">
    <defs>
      <linearGradient id="wall" x1="0" y1="0" x2="0" y2="1">
        <stop offset="0" stopColor="#4a4a4a" />
        <stop offset="0.45" stopColor="#7d7a79" />
        <stop offset="0.7" stopColor="#c8c7c7" />
        <stop offset="0.85" stopColor="#777" />
        <stop offset="1" stopColor="#333" />
      </linearGradient>
      <linearGradient id="edge" gradientUnits="userSpaceOnUse" x1="0" y1="80" x2="0" y2="1240">
        <stop offset="0" stopColor="#777879" />
        <stop offset="0.36" stopColor="#777879" />
        <stop offset="0.47" stopColor="#b5b3b3" />
        <stop offset="0.6" stopColor="#8b8b8c" />
        <stop offset="0.8" stopColor="#777372" />
        <stop offset="1" stopColor="#77797b" />
      </linearGradient>
    </defs>
    <g stroke="#15171a" strokeWidth={4} strokeLinejoin="round">
      <path d="M275 323L360 346L313 410Z" fill={RIB} />
      <path d="M318 358l30 7-18 17z" fill="#444" />
      <g transform="translate(600 570)">
        <path d="M580 25L1015 155L1435 1152L97 750L60 663L200 460L300 300Z" fill={RIB} />
        <path d="M97 750L1435 1152L1312 1335C1272 1397 1227 1434 1172 1436L-165 1034Z" fill={CELL} />
        <g fill={CELL}>
          <path d="M175 557L327 602L420 825L120 737L97 672Z" />
          <path d="M347 610L648 700L743 920L443 832Z" />
          <path d="M670 707L970 797L1065 1018L765 930Z" />
          <path d="M993 803L1295 893L1388 1115L1088 1027Z" />
          <path d="M893 565L1193 655L1285 877L988 787Z" />
          <path d="M857 343L1092 413L1183 635L887 547L848 450Z" />
          <path d="M690 83L990 175L1082 395L857 328L830 240L770 180L710 130Z" />
          <path d="M630 65L668 75L682 103Z" />
        </g>
        <g fill={LIGHT}>
          <path d="M327 602L218 763L420 825Z" />
          <path d="M648 700L542 860L743 920Z" />
          <path d="M970 797L864 958L1065 1018Z" />
          <path d="M1295 893L1187 1055L1388 1115Z" />
          <path d="M1193 655L1085 815L1285 877Z" />
          <path d="M1092 413L985 575L1183 635Z" />
          <path d="M990 175L885 332L1082 395Z" />
          <path d="M257 432L180 545L318 583Z" />
          <path d="M835 478L806 522L862 540Z" />
          <path d="M668 82l-12 12 18 14z" />
        </g>
        <path
          d="M252 -240L580 25L710 130L790 195C830 235 852 290 857 343C858 390 852 430 845 455L802 535L868 557L963 778L663 690L572 465L547 458L640 680L340 590L268 415L200 300L220 -230Z"
          fill={CELL}
        />
        <path d="M835 478L806 522L862 540Z" fill={LIGHT} />
        <g fill={LIGHT}>
          <path d="M547 458L440 620L640 680Z" />
          <path d="M868 557L763 717L963 778Z" />
        </g>
        <path d="M257 -238L580 25L770 180L260 -222Z" fill="#8a8b8c" />
        <path d="M760 172L800 207L825 240" fill="none" strokeWidth={7} />
        <path d="M60 663L97 672L228 468" fill="none" />
      </g>
      <path d={sweep(bottomArc, [1337, 400])} strokeWidth={4} fill="none" />

      <path
        d="M680 75C725 85 765 110 778 160L850 330L928 513C946 570 949 640 942 729C932 840 895 945 829 1039L695 1243L661 1234L640 900L640 300Z"
        fill="url(#edge)"
      />
      <path d={sweep(topArc, [34, 9])} />
      <path d="M680 76C710 80 728 90 742 106" strokeWidth={10} fill="none" />
      <path d={sweep(rightArc, D)} />
      <path
        d="M275 323L313 410L500 140C545 85 590 63 635 65C700 68 728 105 747 152L895 505C912 560 915 640 908 720C898 830 860 940 795 1030L661 1234L695 1320L575 1508C535 1570 490 1602 435 1604C405 1602 385 1580 370 1553L80 875C60 810 60 650 140 530Z"
        fill="#acffff"
      />
      <Hole id="upper" cx={565} cy={367}>
        <path d="M420 120h300v500H420z" fill="#fcfcfc" stroke="none" />
        <path d="M440 378L720 456V620H440z" fill={RIB} />
        <path d="M440 397L622 450L530 592L440 620Z" fill={CELL} />
        <path d="M622 450L520 605H600L650 520Z" fill={LIGHT} />
        <path d="M642 455l16-2-12 17z" fill="#333" />
      </Hole>
      <Hole id="lower" cx={738} cy={780}>
        <path d="M560 520h340v520H560z" fill={CELL} stroke="none" />
      </Hole>
    </g>
    <path d="M303 953l88 86-38 1 18 31-25 11-18-34-25 26z" fill="#888" opacity={0.4} transform="translate(7 6)" />
    <path d="M303 953l88 86-38 1 18 31-25 11-18-34-25 26z" fill="#bdff0a" stroke="#000" strokeWidth={7} />
  </SceneSvg>
);

const NavCube = () => (
  <NavSvg viewBox="0 12 612 558" role="img" aria-label="Navigation cube">
    <g fill="none" stroke="#777" strokeWidth={3} strokeLinejoin="round">
      <path d="M337 37L383 86H292ZM292 481H383L337 529ZM91 283L140 238V328ZM584 283L535 238V328Z" />
      <circle cx={554} cy={68} r={25} />
      <path d="M265 61L275 90Q235 102 192 138L204 150L151 167L161 110L172 125Q215 80 265 61Z" />
      <path d="M410 61L400 90Q440 102 483 138L471 150L524 167L514 110L503 125Q460 80 410 61Z" />
      <path d="M247 152L270 140L320 124L420 152L440 162L456 182L488 258L496 285L488 325L430 412L412 425L360 442L265 415L235 403L222 390L180 285L184 245Z" />
      <path d="M320 124L305 138L247 152M305 138L337 212L370 237L468 264L488 258M268 148L300 222L337 212M300 222L293 265L325 287L362 273L370 237M293 265L235 357L215 358M235 357L262 372L325 287M262 372L272 408L370 438M362 273L463 303L472 332L415 420M468 264L463 303M472 332L488 325M222 385L272 408" />
      <path d="M468 435V481L505 496L543 481V435L505 421ZM468 435L505 450L543 435" />
      <path d="M505 450V496M187 303L222 388" stroke="#333" strokeWidth={4} />
    </g>
    <path d="M150 310L200 425" stroke="#a3dd9e" strokeWidth={5} />
    <path d="M205 428L358 474" stroke="#c0a898" strokeWidth={5} />
    <path d="M295 287L202 425" stroke="#5d82b8" strokeWidth={5} />
    <g fill="#808080" fontFamily={FONT} textAnchor="middle">
      <text fontSize={40} transform="translate(388 207) rotate(15)">TOP</text>
      <text fontSize={46} transform="translate(365 372) rotate(15)">FRONT</text>
      <text fontSize={40} transform="translate(226 258) rotate(66)">LEFT</text>
    </g>
  </NavSvg>
);

const AxisCross = () => (
  <CrossSvg viewBox="0 0 50 50" role="img" aria-label="Axis cross">
    <path d="M16 38L29 18" stroke="#244f91" strokeWidth={1.5} />
    <path d="M33 13l-2 9-3 3-4-2 1-5z" fill="#244f91" />
    <path d="M16 38L11 27" stroke="#6aa84f" strokeWidth={1.5} />
    <path d="M9 23l4 1 1 5-3 2-3-3z" fill="#6ab040" />
    <path d="M16 38l14 4" stroke="#b04040" strokeWidth={1.5} />
    <path d="M37 45l-8 0-1-3 4-2z" fill="#b52a2a" />
    <g fontFamily={FONT} fontSize={10} fontWeight={700} fill="#111">
      <text x={33} y={12}>Z</text>
      <text x={10} y={22}>Y</text>
      <text x={38} y={44}>X</text>
    </g>
  </CrossSvg>
);

/* ---------- status bar ---------- */

const StatusBar = styled.footer`
  position: relative;
  display: flex;
  align-items: center;
  flex: none;
  height: 38px;
  padding: 0 3px;
`;
const StatusText = styled.span`
  flex: 1;
`;
const StatusGroup = styled.label<{ $gap: number; $after: number }>`
  display: flex;
  align-items: center;
  gap: ${(p) => p.$gap}px;
  margin-right: ${(p) => p.$after}px;
`;
const Subscribe = styled.button`
  position: absolute;
  right: 12px;
  bottom: 24px;
  display: flex;
  flex-direction: column;
  align-items: center;
  justify-content: center;
  gap: 2px;
  width: 40px;
  height: 40px;
  padding: 0;
  border: 0;
  background: #ec6b66;
  color: #fff;
  font-family: Roboto, sans-serif;
  font-size: 7px;
  font-weight: 700;
  line-height: 10px;
`;

export default function App() {
  return (
    <>
      <Global />
      <Window>
        <MenuBar>
          {menus.map((m) => (
            <MenuButton key={m}>
              <u>{m[0]}</u>
              {m.slice(1)}
            </MenuButton>
          ))}
        </MenuBar>
        <Toolbar>
          <ToolRun $slot={52} $drop={17} $grip={16} $start={15}>
            {renderTools(["::", "newDoc", "open", "save", "::", "undo+", "redo+", "|", "refresh"])}
          </ToolRun>
          <ToolRun $slot={53} $drop={16} $grip={15} $start={30}>
            <Grip />
            <Combo>
              <Icon name="body" size={19} />
              <PlainSelect aria-label="Workbench">
                <option>Part Design</option>
              </PlainSelect>
              <Caret />
            </Combo>
            {renderTools(["::", "fitAll", "fitSel", "iso+", "alignView", "|", "noSel+", "boxSel+", "refreshView+", "caliper", "::", "part", "axes+", "folder", "link+", "braces", "::", "whatsThis"])}
          </ToolRun>
        </Toolbar>
        <Toolbar>
          <ToolRun $slot={52} $drop={17} $grip={17} $start={13}>
            {renderTools(["::", "body", "sketch+", "validate", "pawn", "surface", "sheep"])}
          </ToolRun>
          <ToolRun $slot={53} $drop={16} $grip={14} $start={17}>
            {renderTools([
              "::", "pad", "revolve", "loft", "pipe", "helix", "primitive+", "|",
              "pocket", "hole", "groove", "subLoft", "subPipe", "subHelix", "subPrimitive+", "|",
              "boolean", "::", "fillet", "chamfer", "draft", "thickness", "::", "mirror", "linear", "polar", "multi",
            ])}
          </ToolRun>
        </Toolbar>
        <Workspace>
          <Dock $left>
            <DockHead title="Model" />
            <Tree>
              <TreeRow $indent={1} $bold>
                <Twist><Caret $dark /></Twist>
                <TreeLabel><Icon name="doc" size={20} />demo4</TreeLabel>
              </TreeRow>
              <TreeRow $indent={30} $muted>
                <TreeLabel><Icon name="eyeOff" size={16} /><Icon name="solid" size={19} />CNCBitCase002 (Solid)</TreeLabel>
              </TreeRow>
              <TreeRow $indent={30}>
                <TreeLabel><Icon name="eye" size={16} /><Icon name="clone" size={19} />CNCBitCase002 (Solid)001</TreeLabel>
              </TreeRow>
              <TreeRow $indent={18} $bold>
                <Twist><Caret $dark /></Twist>
                <TreeLabel $selected><Icon name="eye" size={16} /><Icon name="bodySmall" size={19} />Body</TreeLabel>
              </TreeRow>
              <TreeRow $indent={34} $muted>
                <Twist><Caret $dark $dir="right" /></Twist>
                <TreeLabel><Icon name="eyeOff" size={16} /><Icon name="origin" size={19} />Origin</TreeLabel>
              </TreeRow>
            </Tree>
            <PropertyPanel aria-label="Properties" />
            <PropertyTabs>
              <PropertyTab $active>View</PropertyTab>
              <PropertyTab>Data</PropertyTab>
            </PropertyTabs>
          </Dock>
          <Center>
            <Viewport>
              <Scene />
              <NavCube />
              <AxisCross />
            </Viewport>
            <DocTabs>
              <DocTab>
                <Icon name="doc" size={20} />
                demo4 : 1*
                <TabClose aria-label="Close tab"><Icon name="close" size={16} /></TabClose>
              </DocTab>
            </DocTabs>
          </Center>
          <Dock>
            <DockHead title="Tasks" />
            <TaskBox>
              <TaskHead>
                <Icon name="startPart" size={19} />
                Start Part
                <Caret $dir="up" />
              </TaskHead>
              <TaskRow>
                <Icon name="body" size={19} />
                New Body
              </TaskRow>
            </TaskBox>
          </Dock>
        </Workspace>
        <StatusBar>
          <StatusText>Preselected: demo3_ceoss_sections.CNCBitCase002_solid001.Face1 (0.00 mm, 5.94 mm, 8.14 mm)</StatusText>
          <StatusGroup $gap={6} $after={24}>
            <Icon name="notif" size={18} />
            11
            <Caret $dark />
          </StatusGroup>
          <StatusGroup $gap={4} $after={22}>
            <Icon name="touchpad" size={17} />
            <PlainSelect $width={84} aria-label="Navigation style">
              <option>Touchpad</option>
            </PlainSelect>
            <Caret $dark />
          </StatusGroup>
          <StatusGroup $gap={16} $after={0}>
            113.11 mm x 92.93 mm
            <Caret $dark />
          </StatusGroup>
          <Subscribe>
            <svg width="17" height="12" viewBox="0 0 17 12" aria-hidden="true">
              <rect width="17" height="12" rx="3" fill="#fff" />
              <path d="M7 3l5 3-5 3z" fill="#ec6b66" />
            </svg>
            SUBSCRIBE
          </Subscribe>
        </StatusBar>
      </Window>
    </>
  );
}
